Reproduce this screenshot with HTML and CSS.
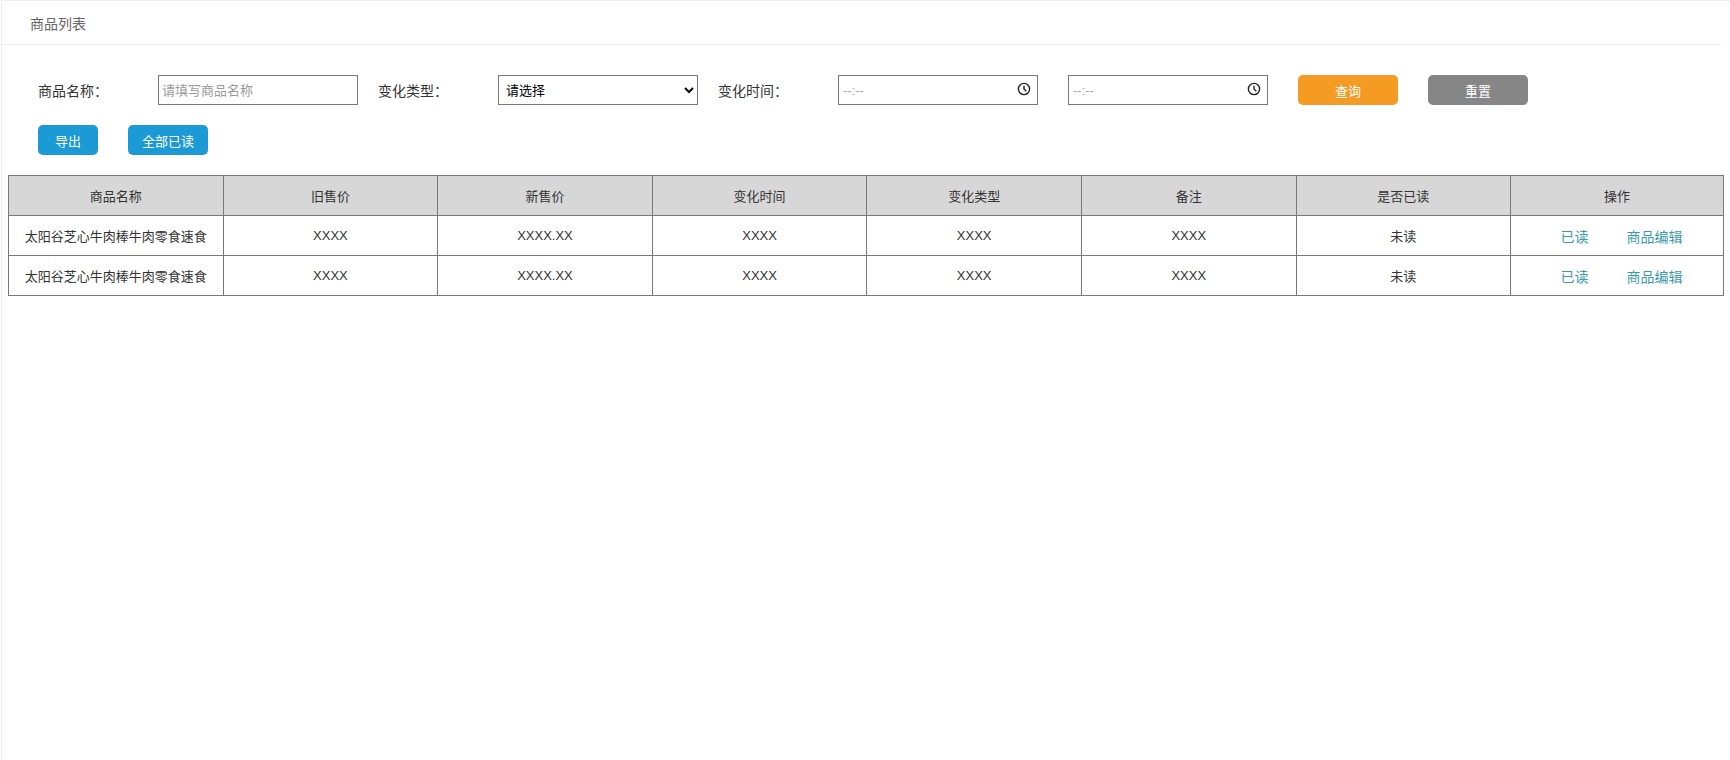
FILE: index.html
```html
<!DOCTYPE html>
<html lang="zh-CN">
<head>
<meta charset="utf-8">
<title>商品列表</title>
<link rel="stylesheet" href="styles.css">
</head>
<body>
<main class="page">
  <header class="tabbar"><span class="tab-title">商品列表</span></header>
  <section class="filters">
    <div class="filter-row">
      <label class="field-label">商品名称：</label>
      <input class="control text-input" type="text" placeholder="请填写商品名称">
      <label class="field-label gap-20">变化类型：</label>
      <select class="control select-input"><option>请选择</option></select>
      <label class="field-label gap-20">变化时间：</label>
      <div class="control time-input"><span class="time-text">--:--</span>
        <svg class="clock" viewBox="0 0 12 12"><circle cx="6" cy="6" r="4.8"/><path d="M6 3.2V6L8 8"/></svg>
      </div>
      <div class="control time-input gap-30"><span class="time-text">--:--</span>
        <svg class="clock" viewBox="0 0 12 12"><circle cx="6" cy="6" r="4.8"/><path d="M6 3.2V6L8 8"/></svg>
      </div>
      <button class="btn btn-orange gap-30">查询</button>
      <button class="btn btn-gray gap-30">重置</button>
    </div>
    <div class="action-row">
      <button class="btn btn-blue btn-export">导出</button>
      <button class="btn btn-blue btn-readall">全部已读</button>
    </div>
  </section>
  <table class="data-table">
    <colgroup>
      <col class="col-std"><col class="col-std"><col class="col-std"><col class="col-std"><col class="col-std"><col class="col-std"><col class="col-std"><col class="col-last">
    </colgroup>
    <thead>
      <tr><th>商品名称</th><th>旧售价</th><th>新售价</th><th>变化时间</th><th>变化类型</th><th>备注</th><th>是否已读</th><th>操作</th></tr>
    </thead>
    <tbody>
      <tr><td>太阳谷芝心牛肉棒牛肉零食速食</td><td>XXXX</td><td>XXXX.XX</td><td>XXXX</td><td>XXXX</td><td>XXXX</td><td>未读</td><td class="ops"><a class="link">已读</a><a class="link">商品编辑</a></td></tr>
      <tr><td>太阳谷芝心牛肉棒牛肉零食速食</td><td>XXXX</td><td>XXXX.XX</td><td>XXXX</td><td>XXXX</td><td>XXXX</td><td>未读</td><td class="ops"><a class="link">已读</a><a class="link">商品编辑</a></td></tr>
    </tbody>
  </table>
</main>
</body>
</html>
```
FILE: styles.css
```css
* { box-sizing: border-box; }
html, body { margin: 0; height: 100%; background: #fff; }
body {
  font-family: "Liberation Sans", "Noto Sans CJK SC", sans-serif;
  font-size: 13px;
  color: #333;
  overflow: hidden;
}
.page {
  height: 760px;
  margin-left: 1px;
  border-left: 1px solid #efefef;
  border-top: 1px solid #efefef;
}
.tabbar {
  height: 44px;
  display: flex;
  align-items: center;
  padding-left: 28px;
  border-bottom: 1px solid #efefef;
  margin-right: 8px;
}
.tab-title { font-size: 14px; color: #666; }
.filters { padding: 30px 0 0 36px; }
.filter-row, .action-row { display: flex; align-items: center; }
.field-label { width: 120px; font-size: 14px; color: #333; }
.gap-20 { margin-left: 20px; }
.gap-30 { margin-left: 30px; }
.control {
  width: 200px;
  height: 30px;
  border: 1px solid #797979;
  background: #fff;
  border-radius: 0;
  font-family: inherit;
  font-size: 13px;
}
.text-input { padding: 0 3px; outline: none; }
.text-input::placeholder { color: #999; }
.select-input { padding: 0 3px; color: #000; }
.time-input {
  display: flex;
  align-items: center;
  justify-content: space-between;
  padding: 0 6px 0 4px;
}
.time-text { color: #aaa; font-size: 13px; }
.clock { width: 14px; height: 14px; fill: none; stroke: #222; stroke-width: 1.2; margin-top: -2px; }
.btn {
  width: 100px;
  height: 30px;
  padding: 0;
  border: 0;
  border-radius: 5px;
  color: #fff;
  font-family: inherit;
  font-size: 13px;
}
.btn-orange { background: #f59a23; }
.btn-gray { background: #868686; }
.btn-blue { background: #1b9ad6; }
.action-row { margin-top: 20px; }
.btn-export { width: 60px; }
.btn-readall { width: 80px; margin-left: 30px; }
.data-table {
  margin: 20px 0 0 6px;
  width: 1715px;
  table-layout: fixed;
  border-collapse: collapse;
}
.col-std { width: 214.6px; }
.col-last { width: 212.8px; }
.data-table th, .data-table td {
  height: 40px;
  padding: 0;
  border: 1px solid #797979;
  text-align: center;
  font-size: 13px;
  font-weight: 400;
  color: #333;
}
.data-table th { background: #d7d7d7; }
.ops { padding-left: 9px !important; }
.link { color: #3a9bab; font-size: 14px; }
.link + .link { margin-left: 38px; }
```
